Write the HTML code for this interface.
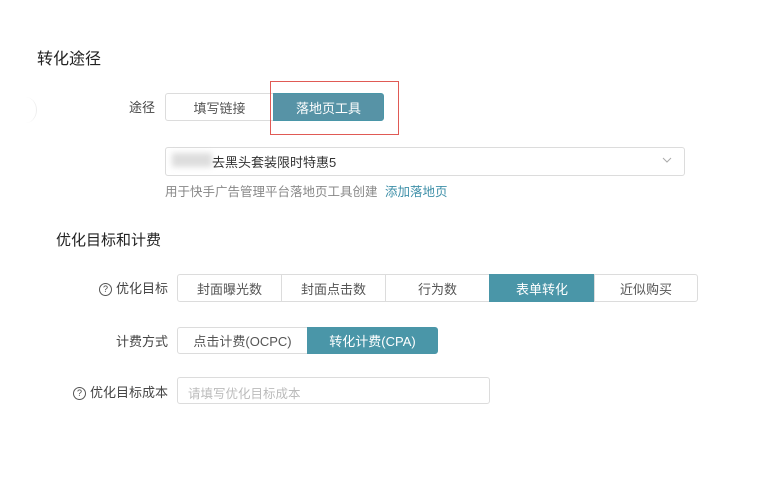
<!DOCTYPE html>
<html><head><meta charset="utf-8"><style>
body{margin:0;width:783px;height:478px;background:#fff;font-family:"Liberation Sans","Noto Sans CJK SC",sans-serif;position:relative;overflow:hidden;color:#333}
.a{position:absolute}
.btn{position:absolute;box-sizing:border-box;border:1px solid #dcdcdc;font-size:13px;color:#555;display:flex;align-items:center;justify-content:center;background:#fff}
.on{background:#4a96a8;color:#fff;border-color:#4a96a8}
.lbl{position:absolute;font-size:13px;color:#444;text-align:right}
.q{display:inline-block;width:11px;height:11px;border:1px solid #555;border-radius:50%;font-size:9px;line-height:11px;text-align:center;margin-right:4px;vertical-align:1px}
</style></head><body>
<div class="a" style="left:37px;top:45px;font-size:16px;color:#222">转化途径</div>
<div class="a" style="left:14px;top:97px;width:22px;height:26px;border-radius:50%;border-right:1px solid #eee"></div>
<div class="lbl" style="left:100px;top:97px;width:55px">途径</div>
<div class="btn" style="left:165px;top:93px;width:109px;height:28px;border-radius:3px 0 0 3px">填写链接</div>
<div class="btn on" style="left:273px;top:93px;width:111px;height:28px;border-radius:0 3px 3px 0;background:#5793a6">落地页工具</div>
<div class="a" style="left:270px;top:81px;width:129px;height:54px;border:1.5px solid #e05a55;box-sizing:border-box"></div>
<div class="a" style="left:165px;top:147px;width:520px;height:29px;border:1px solid #dcdcdc;border-radius:3px;box-sizing:border-box"></div>
<div class="a" style="left:172px;top:153px;width:40px;height:14px;background:#ddd;filter:blur(3px)"></div>
<div class="a" style="left:212px;top:152px;font-size:13px;color:#333">去黑头套装限时特惠5</div>
<svg class="a" style="left:662px;top:156px" width="10" height="8"><path d="M1 2l4 4 4-4" stroke="#aaa" fill="none"/></svg>
<div class="a" style="left:165px;top:181px;font-size:12.5px;color:#888">用于快手广告管理平台落地页工具创建 <span style="color:#3e8fa8;margin-left:4px">添加落地页</span></div>
<div class="a" style="left:56px;top:229px;font-size:15px;color:#222">优化目标和计费</div>
<div class="lbl" style="left:90px;top:278px;width:78px"><span class="q">?</span>优化目标</div>
<div class="btn" style="left:177px;top:274px;width:105px;height:28px;border-radius:3px 0 0 3px">封面曝光数</div>
<div class="btn" style="left:281px;top:274px;width:105px;height:28px">封面点击数</div>
<div class="btn" style="left:385px;top:274px;width:105px;height:28px">行为数</div>
<div class="btn on" style="left:489px;top:274px;width:106px;height:28px">表单转化</div>
<div class="btn" style="left:594px;top:274px;width:104px;height:28px;border-radius:0 3px 3px 0">近似购买</div>
<div class="lbl" style="left:90px;top:331px;width:78px">计费方式</div>
<div class="btn" style="left:177px;top:327px;width:131px;height:27px;border-radius:3px 0 0 3px">点击计费(OCPC)</div>
<div class="btn on" style="left:307px;top:327px;width:131px;height:27px;border-radius:0 3px 3px 0">转化计费(CPA)</div>
<div class="lbl" style="left:60px;top:382px;width:108px"><span class="q">?</span>优化目标成本</div>
<div class="a" style="left:177px;top:377px;width:313px;height:27px;border:1px solid #dcdcdc;border-radius:3px;box-sizing:border-box;font-size:12.5px;color:#bbb;padding:5px 0 0 10px">请填写优化目标成本</div>
</body></html>
